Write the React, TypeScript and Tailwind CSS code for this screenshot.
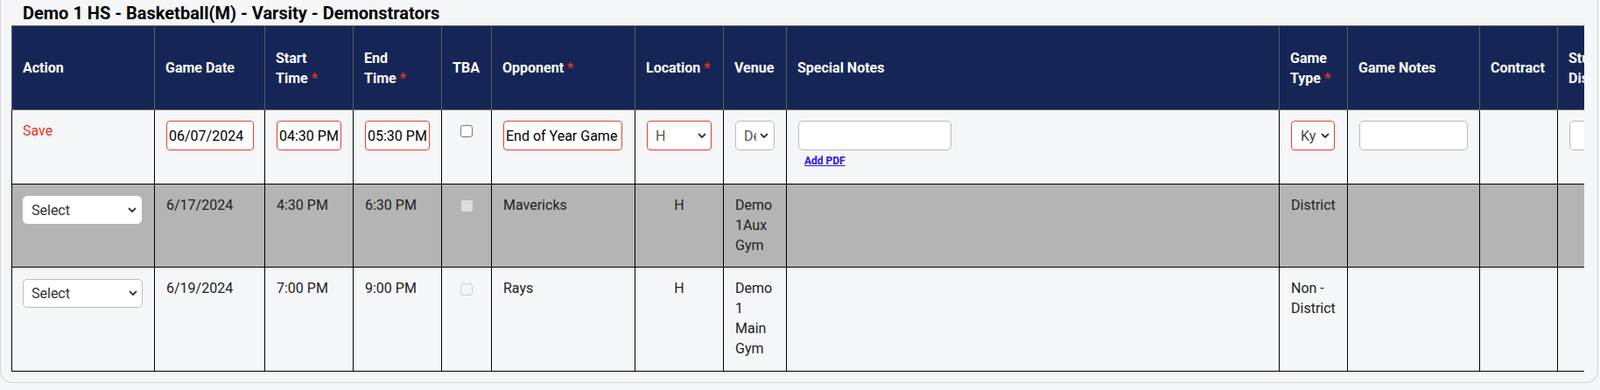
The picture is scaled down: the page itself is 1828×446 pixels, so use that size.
import React from 'react';

type Game = {
    date: string;
    start: string;
    end: string;
    opponent: string;
    location: string;
    venue: string;
    gameType: string;
    shaded: boolean;
};

const games: Game[] = [
    { date: '6/17/2024', start: '4:30 PM', end: '6:30 PM', opponent: 'Mavericks', location: 'H', venue: 'Demo 1Aux Gym', gameType: 'District', shaded: true },
    { date: '6/19/2024', start: '7:00 PM', end: '9:00 PM', opponent: 'Rays', location: 'H', venue: 'Demo 1 Main Gym', gameType: 'Non - District', shaded: false },
];

function Chevron() {
    return (
        <svg width="10" height="7" viewBox="0 0 10 7" className="shrink-0">
            <path d="M1.5 1.5 L5 5 L8.5 1.5" fill="none" stroke="#3a3a3a" strokeWidth="1.8" strokeLinecap="round" strokeLinejoin="round" />
        </svg>
    );
}

function FakeSelect({ className, label, labelClass }: { className: string; label: string; labelClass: string }) {
    return (
        <div className={`flex items-center gap-[4px] bg-white ${className}`}>
            <span className={`min-w-0 flex-1 overflow-hidden whitespace-nowrap ${labelClass}`}>{label}</span>
            <Chevron />
        </div>
    );
}

function Req() {
    return <span className="text-[#e5331f]">*</span>;
}

const th = 'h-[97px] border-t border-b border-r border-[#5c5c5c] bg-[#152656] pl-[12px] pr-[6px] text-left align-middle text-[16px] font-bold leading-[23px] text-white';
const td = 'border-r border-b border-black px-[13px] pt-[12px] pb-[12px] align-top text-[16px] leading-[23px] text-[#222]';
const redInput = 'block h-[34px] rounded-[4px] border border-[#e3402d] bg-white px-[2px] text-[16px] text-black outline-none';
const grayInput = 'block h-[34px] rounded-[5px] border border-[#b9b9b9] bg-white px-[2px] text-[16px] text-black outline-none';

export default function App() {
    return (
        <div className="min-h-[446px] w-full bg-[#f6f7f9] font-['Roboto',sans-serif]">
            <div className="w-[1826px] rounded-b-[14px] border-x border-b border-[#d2d2d2] bg-[#f5f6f8] pl-[12px] pr-[15px] pb-[12px]">
                <div className="h-[29px] whitespace-nowrap pl-[13px] pt-[3px] text-[20px] font-bold leading-[24px] text-black">
                    Demo 1 HS - Basketball(M) - Varsity - Demonstrators
                </div>
                <div className="w-[1797px] overflow-hidden">
                    <table className="w-[1907px] table-fixed border-separate border-spacing-0">
                        <colgroup>
                            <col className="w-[164px]" />
                            <col className="w-[126px]" />
                            <col className="w-[101px]" />
                            <col className="w-[101px]" />
                            <col className="w-[57px]" />
                            <col className="w-[164px]" />
                            <col className="w-[101px]" />
                            <col className="w-[72px]" />
                            <col className="w-[563px]" />
                            <col className="w-[78px]" />
                            <col className="w-[151px]" />
                            <col className="w-[89px]" />
                            <col className="w-[140px]" />
                        </colgroup>
                        <thead>
                            <tr>
                                <th className={`${th} border-l`}>Action</th>
                                <th className={th}>Game Date</th>
                                <th className={th}>
                                    Start
                                    <br />
                                    Time <Req />
                                </th>
                                <th className={th}>
                                    End
                                    <br />
                                    Time <Req />
                                </th>
                                <th className={th}>TBA</th>
                                <th className={th}>Opponent <Req /></th>
                                <th className={`${th} whitespace-nowrap`}>Location <Req /></th>
                                <th className={th}>Venue</th>
                                <th className={th}>Special Notes</th>
                                <th className={th}>
                                    Game
                                    <br />
                                    Type <Req />
                                </th>
                                <th className={th}>Game Notes</th>
                                <th className={th}>Contract</th>
                                <th className={th}>
                                    Student
                                    <br />
                                    Dismissal
                                </th>
                            </tr>
                        </thead>
                        <tbody>
                            {/* edit row */}
                            <tr>
                                <td className={`${td} h-[85px] border-l pl-[12px]`}>
                                    <span className="text-[#ee3320]">Save</span>
                                </td>
                                <td className={`${td} h-[85px]`}>
                                    <input readOnly value="06/07/2024" className={`${redInput} w-[100px]`} />
                                </td>
                                <td className={`${td} h-[85px]`}>
                                    <input readOnly value="04:30 PM" className={`${redInput} w-[74px]`} />
                                </td>
                                <td className={`${td} h-[85px]`}>
                                    <input readOnly value="05:30 PM" className={`${redInput} w-[74px]`} />
                                </td>
                                <td className={`${td} h-[85px] px-0`}>
                                    <div className="mx-auto mt-[5px] h-[14px] w-[14px] rounded-[3px] border border-[#777] bg-white" />
                                </td>
                                <td className={`${td} h-[85px]`}>
                                    <input readOnly value="End of Year Game" className={`${redInput} w-[136px]`} />
                                </td>
                                <td className={`${td} h-[85px]`}>
                                    <FakeSelect
                                        className="h-[34px] w-[74px] rounded-[4px] border border-[#e3402d] pl-[9px] pr-[5px]"
                                        label="H"
                                        labelClass="text-[#555]"
                                    />
                                </td>
                                <td className={`${td} h-[85px]`}>
                                    <FakeSelect
                                        className="h-[34px] w-[45px] rounded-[5px] border border-[#b9b9b9] pl-[9px] pr-[6px]"
                                        label="Demo 1Aux Gym"
                                        labelClass="text-[#555]"
                                    />
                                </td>
                                <td className={`${td} h-[85px]`}>
                                    <input readOnly value="" className={`${grayInput} w-[175px]`} />
                                    <a href="#" className="mt-[4px] ml-[7px] block w-max text-[12px] font-bold leading-[16px] text-[#2a12f2] underline">
                                        Add PDF
                                    </a>
                                </td>
                                <td className={`${td} h-[85px]`}>
                                    <FakeSelect
                                        className="h-[34px] w-[50px] rounded-[4px] border border-[#e3402d] pl-[10px] pr-[5px]"
                                        label="Ky"
                                        labelClass="text-[#444]"
                                    />
                                </td>
                                <td className={`${td} h-[85px]`}>
                                    <input readOnly value="" className={`${grayInput} w-[124px]`} />
                                </td>
                                <td className={`${td} h-[85px]`}></td>
                                <td className={`${td} h-[85px]`}>
                                    <input readOnly value="" className={`${grayInput} w-[110px]`} />
                                </td>
                            </tr>

                            {games.map((g) => {
                                const bg = g.shaded ? 'bg-[#b4b4b4]' : 'bg-[#f5f6f8]';
                                const h = g.shaded ? 'h-[95px]' : 'h-[119px]';
                                return (
                                    <tr key={g.date} className={bg}>
                                        <td className={`${td} ${h} border-l pl-[12px]`}>
                                            <FakeSelect
                                                className={
                                                    g.shaded
                                                        ? 'mt-[1px] h-[32px] w-[136px] rounded-[5px] border border-white pl-[9px] pr-[5px]'
                                                        : 'mt-[1px] h-[33px] w-[137px] rounded-[5px] border border-[#bdbdbd] pl-[9px] pr-[5px]'
                                                }
                                                label="Select"
                                                labelClass="text-[#333]"
                                            />
                                        </td>
                                        <td className={`${td} ${h}`}>{g.date}</td>
                                        <td className={`${td} ${h}`}>{g.start}</td>
                                        <td className={`${td} ${h}`}>{g.end}</td>
                                        <td className={`${td} ${h} px-0`}>
                                            <div
                                                className={
                                                    g.shaded
                                                        ? 'mx-auto mt-[6px] h-[13px] w-[13px] rounded-[2px] bg-[#dcdcdc]'
                                                        : 'mx-auto mt-[6px] h-[14px] w-[14px] rounded-[3px] border border-[#cfcfcf] bg-[#f3f3f3]'
                                                }
                                            />
                                        </td>
                                        <td className={`${td} ${h}`}>{g.opponent}</td>
                                        <td className={`${td} ${h} text-center`}>{g.location}</td>
                                        <td className={`${td} ${h}`}>{g.venue}</td>
                                        <td className={`${td} ${h}`}></td>
                                        <td className={`${td} ${h}`}>{g.gameType}</td>
                                        <td className={`${td} ${h}`}></td>
                                        <td className={`${td} ${h}`}></td>
                                        <td className={`${td} ${h}`}></td>
                                    </tr>
                                );
                            })}
                        </tbody>
                    </table>
                </div>
            </div>
        </div>
    );
}
